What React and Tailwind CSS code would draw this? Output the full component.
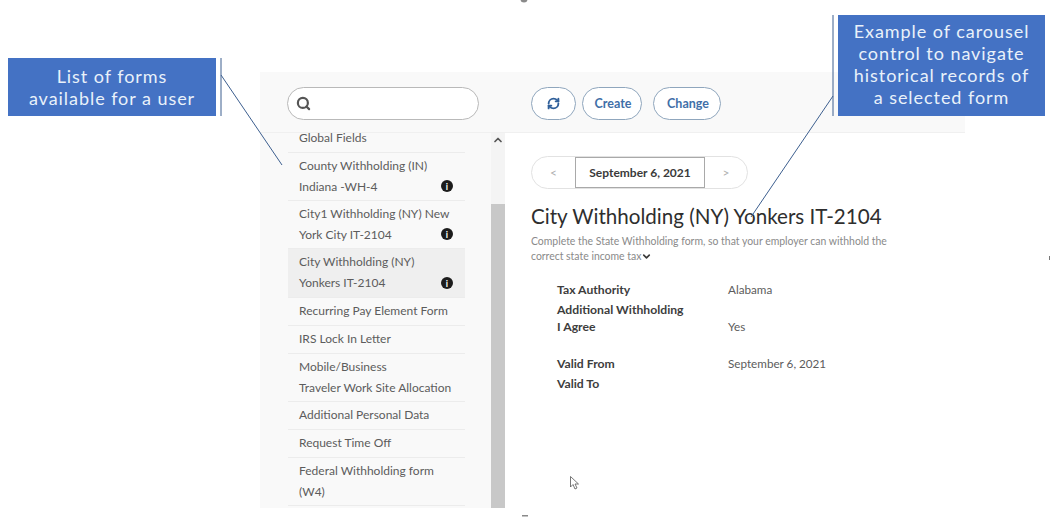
import { Search, RefreshCw, ChevronUp, ChevronDown } from "lucide-react";

const forms = [
  { id: "global", lines: ["Global Fields"], h: "h-[20px] pb-[11px]" },
  { id: "county", lines: ["County Withholding (IN)", "Indiana -WH-4"], info: true },
  { id: "city1", lines: ["City1 Withholding (NY) New", "York City IT-2104"], info: true },
  { id: "city", lines: ["City Withholding (NY)", "Yonkers IT-2104"], info: true, selected: true, h: "h-[49px] pb-[2px]" },
  { id: "recurring", lines: ["Recurring Pay Element Form"] },
  { id: "irs", lines: ["IRS Lock In Letter"] },
  { id: "mobile", lines: ["Mobile/Business", "Traveler Work Site Allocation"] },
  { id: "personal", lines: ["Additional Personal Data"] },
  { id: "timeoff", lines: ["Request Time Off"] },
  { id: "federal", lines: ["Federal Withholding form", "(W4)"] },
];

function FormRow({ form }) {
  const height = form.h ?? (form.lines.length > 1 ? "h-[48px] pb-[2px]" : "h-[28px] pb-[2px]");
  return (
    <div
      className={[
        "relative flex shrink-0 flex-col justify-center border-b border-[#ececec] pl-[11px] text-[12px] leading-[21px] text-[#5c5c5c]",
        height,
        form.selected ? "bg-[#efefef]" : "",
      ].join(" ")}
    >
      {form.lines.map((line) => (
        <div key={line}>{line}</div>
      ))}
      {form.info && (
        <span className="absolute bottom-[8px] right-[12px] flex h-[12px] w-[12px] items-center justify-center rounded-full bg-[#1c1c1c] text-[9px] font-bold leading-none text-white">
          i
        </span>
      )}
    </div>
  );
}

function Sidebar() {
  return (
    <div className="flex w-[245px] shrink-0 flex-col bg-[#f9f9f9]">
      <div className="flex h-[61px] shrink-0 items-start border-b border-[#f0f0f0] pl-[27px] pt-[15px]">
        <div className="flex h-[33px] w-[192px] items-center rounded-full border border-[#b9b9b9] bg-white pl-[8px]">
          <Search size={15} strokeWidth={3.5} className="text-[#555555]" />
        </div>
      </div>
      <div className="flex min-h-0 flex-1">
        <div className="ml-[28px] flex w-[177px] flex-col">
          {forms.map((form) => (
            <FormRow key={form.id} form={form} />
          ))}
        </div>
        <div className="ml-[26px] flex w-[14px] flex-col bg-[#f4f4f4]">
          <div className="flex h-[71px] shrink-0 justify-center pt-[1px]">
            <ChevronUp size={12} strokeWidth={3.5} className="text-[#555555]" />
          </div>
          <div className="flex-1 bg-[#c8c8c8]" />
        </div>
      </div>
    </div>
  );
}

function PillButton({ children, className = "" }) {
  return (
    <button
      className={[
        "flex h-[33px] items-center justify-center rounded-full border border-[#8fa6bd] bg-white text-[12.5px] font-bold text-[#3f6fa8]",
        className,
      ].join(" ")}
    >
      {children}
    </button>
  );
}

function Field({ label, value, className = "" }) {
  return (
    <div className={["flex h-[16px] items-baseline leading-[16px]", className].join(" ")}>
      <div className="w-[171px] text-[12.2px] font-bold text-[#3d3d3d]">{label}</div>
      <div className="text-[11.7px] text-[#5c5c5c]">{value}</div>
    </div>
  );
}

function Detail() {
  return (
    <div className="flex w-[460px] shrink-0 flex-col">
      <div className="flex h-[61px] shrink-0 items-start border-b border-[#f0f0f0] bg-[#f9f9f9] pl-[26px] pt-[15px]">
        <PillButton className="w-[45px]">
          <RefreshCw size={13} strokeWidth={3.5} className="text-[#2f5f9a]" />
        </PillButton>
        <PillButton className="ml-[6px] w-[60px] pl-[2px] pt-[1px]">Create</PillButton>
        <PillButton className="ml-[11px] w-[68px] pl-[2px] pt-[1px]">Change</PillButton>
      </div>
      <div className="pl-[26px] pt-[23px]">
        <div className="flex h-[33px] w-[217px] items-stretch rounded-full border border-[#e2e2e2] text-[12px] text-[#b0b0b0]">
          <div className="flex w-[43px] items-center justify-center">&lt;</div>
          <div className="flex w-[130px] items-center justify-center border border-[#a9a9a9] font-bold text-[#3a3a3a]">
            September 6, 2021
          </div>
          <div className="flex flex-1 items-center justify-center">&gt;</div>
        </div>
        <h1 className="mt-[14px] text-[20.6px] font-normal leading-[26px] text-[#2e2e2e]">
          City Withholding (NY) Yonkers IT-2104
        </h1>
        <p className="mt-[5px] w-[372px] text-[10.45px] leading-[15px] text-[#8a8a8a]">
          Complete the State Withholding form, so that your employer can withhold the correct state income tax
          <ChevronDown size={11} strokeWidth={3.5} className="inline align-[-2px] text-[#3a3a3a]" />
        </p>
        <div className="ml-[26px] mt-[17px]">
          <Field label="Tax Authority" value="Alabama" />
          <Field label="Additional Withholding" className="mt-[5px]" />
          <Field label="I Agree" value="Yes" />
          <Field label="Valid From" value="September 6, 2021" className="mt-[21px]" />
          <Field label="Valid To" className="mt-[5px]" />
        </div>
      </div>
    </div>
  );
}

function Callout({ children, className = "" }) {
  return (
    <div
      className={[
        "absolute flex items-center justify-center bg-[#4472c4] text-center text-[18px] leading-[22px] tracking-[0.95px] text-[#e9f1fa]",
        className,
      ].join(" ")}
    >
      <div>{children}</div>
    </div>
  );
}

export default function App() {
  return (
    <div className="relative h-[517px] w-[1050px] overflow-hidden bg-white font-['Lato','Liberation_Sans',sans-serif]">
      <div className="flex h-[508px] pl-[260px] pt-[72px]">
        <Sidebar />
        <Detail />
      </div>

      <Callout className="left-[8px] top-[58px] h-[58px] w-[208px]">
        List of forms
        <br />
        available for a user
      </Callout>
      <Callout className="left-[838px] top-[15px] h-[101px] w-[207px] pb-[4px]">
        Example of carousel
        <br />
        control to navigate
        <br />
        historical records of
        <br />a selected form
      </Callout>

      {/* leader lines from the callouts */}
      <svg className="pointer-events-none absolute left-0 top-0" width="1050" height="517">
        <path d="M221 58V116M221 75L282 165" fill="none" stroke="#3d5f8f" strokeWidth="1" />
        <path d="M833 15V116M833 96L751 217" fill="none" stroke="#3d5f8f" strokeWidth="1" />
        <path d="M570.5 476.5V487L573 484.5L575 489L577 488L575 484H578.5Z" fill="#fff" stroke="#555" strokeWidth="0.8" />
        <circle cx="524" cy="-1" r="3.5" fill="#8a8a8a" />
        <rect x="522" y="515" width="6" height="1.5" fill="#8a8a8a" />
        <rect x="1049" y="256" width="1" height="4" fill="#777" />
      </svg>
    </div>
  );
}
